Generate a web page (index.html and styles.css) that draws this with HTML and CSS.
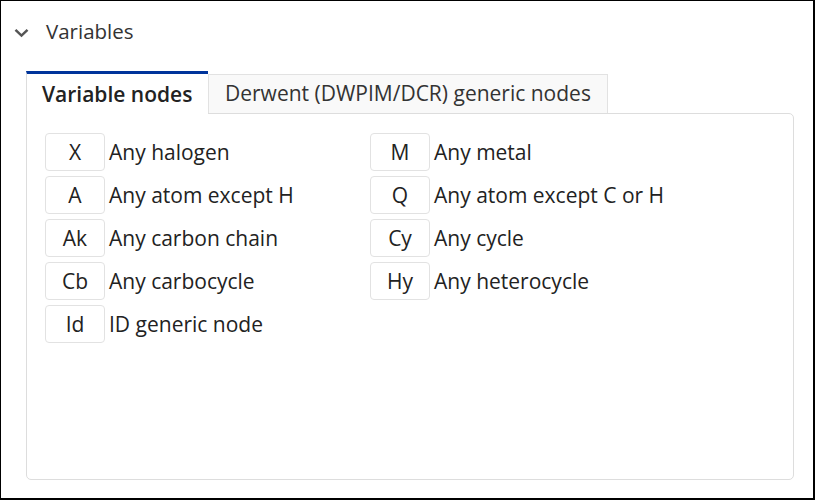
FILE: index.html
```html
<!DOCTYPE html>
<html>
<head>
<meta charset="utf-8">
<link rel="stylesheet" href="styles.css">
</head>
<body>
<div class="frame">
  <div class="header">
    <svg class="chevron" width="15" height="10" viewBox="0 0 15 10"><path d="M1.5 1.8 L7.5 7.6 L13.5 1.8" fill="none" stroke="#555" stroke-width="2.5"/></svg>
    <span class="title">Variables</span>
  </div>
  <div class="tabs">
    <div class="tab active">Variable nodes</div>
    <div class="tab">Derwent (DWPIM/DCR) generic nodes</div>
  </div>
  <div class="panel">
    <div class="grid">
      <div class="item"><span class="sym">X</span><span class="label">Any halogen</span></div>
      <div class="item"><span class="sym">M</span><span class="label">Any metal</span></div>
      <div class="item"><span class="sym">A</span><span class="label">Any atom except H</span></div>
      <div class="item"><span class="sym">Q</span><span class="label">Any atom except C or H</span></div>
      <div class="item"><span class="sym">Ak</span><span class="label">Any carbon chain</span></div>
      <div class="item"><span class="sym">Cy</span><span class="label">Any cycle</span></div>
      <div class="item"><span class="sym">Cb</span><span class="label">Any carbocycle</span></div>
      <div class="item"><span class="sym">Hy</span><span class="label">Any heterocycle</span></div>
      <div class="item"><span class="sym">Id</span><span class="label">ID generic node</span></div>
    </div>
  </div>
</div>
</body>
</html>
```
FILE: styles.css
```css
* { box-sizing: border-box; }
body {
  margin: 0;
  font-family: "Open Sans", "Noto Sans", sans-serif;
  color: #222;
  background: #fff;
}
.frame {
  width: 815px;
  height: 500px;
  border-style: solid;
  border-color: #000;
  border-width: 1px 2px 2px 1px;
  padding: 0 20px 0 25px;
  display: flex;
  flex-direction: column;
}
.header {
  height: 69px;
  display: flex;
  align-items: flex-start;
  padding-top: 16px;
  margin-left: -25px;
}
.chevron {
  margin: 11px 0 0 13px;
}
.title {
  margin-left: 17px;
  font-size: 20.5px;
  color: #333;
  line-height: 28px;
}
.tabs {
  display: flex;
  align-items: flex-end;
  height: 43px;
}
.tab {
  font-size: 21px;
  line-height: 28px;
}
.tab.active {
  height: 43px;
  width: 182px;
  border-top: 3px solid #00349b;
  border-left: 1px solid #ddd;
  background: #fff;
  padding: 6px 0 0 15px;
  font-weight: 600;
  color: #222;
  position: relative;
  z-index: 1;
  margin-bottom: -1px;
}
.tab:not(.active) {
  height: 40px;
  width: 400px;
  border: 1px solid #e2e2e2;
  border-bottom: none;
  background: #f9f9f9;
  padding: 4px 0 0 16px;
  color: #333;
  margin-bottom: -1px;
}
.panel {
  height: 367px;
  width: 768px;
  border: 1px solid #ddd;
  border-radius: 0 5px 5px 5px;
  padding: 19px 0 0 18px;
}
.grid {
  display: grid;
  grid-template-columns: 325px 325px;
  row-gap: 5px;
}
.item {
  display: flex;
  align-items: center;
  height: 38px;
}
.sym {
  width: 60px;
  height: 38px;
  border: 1px solid #e2e2e2;
  border-radius: 4px;
  display: flex;
  align-items: center;
  justify-content: center;
  font-size: 21px;
  color: #222;
}
.label {
  margin-left: 4px;
  font-size: 21px;
  color: #222;
}
```
